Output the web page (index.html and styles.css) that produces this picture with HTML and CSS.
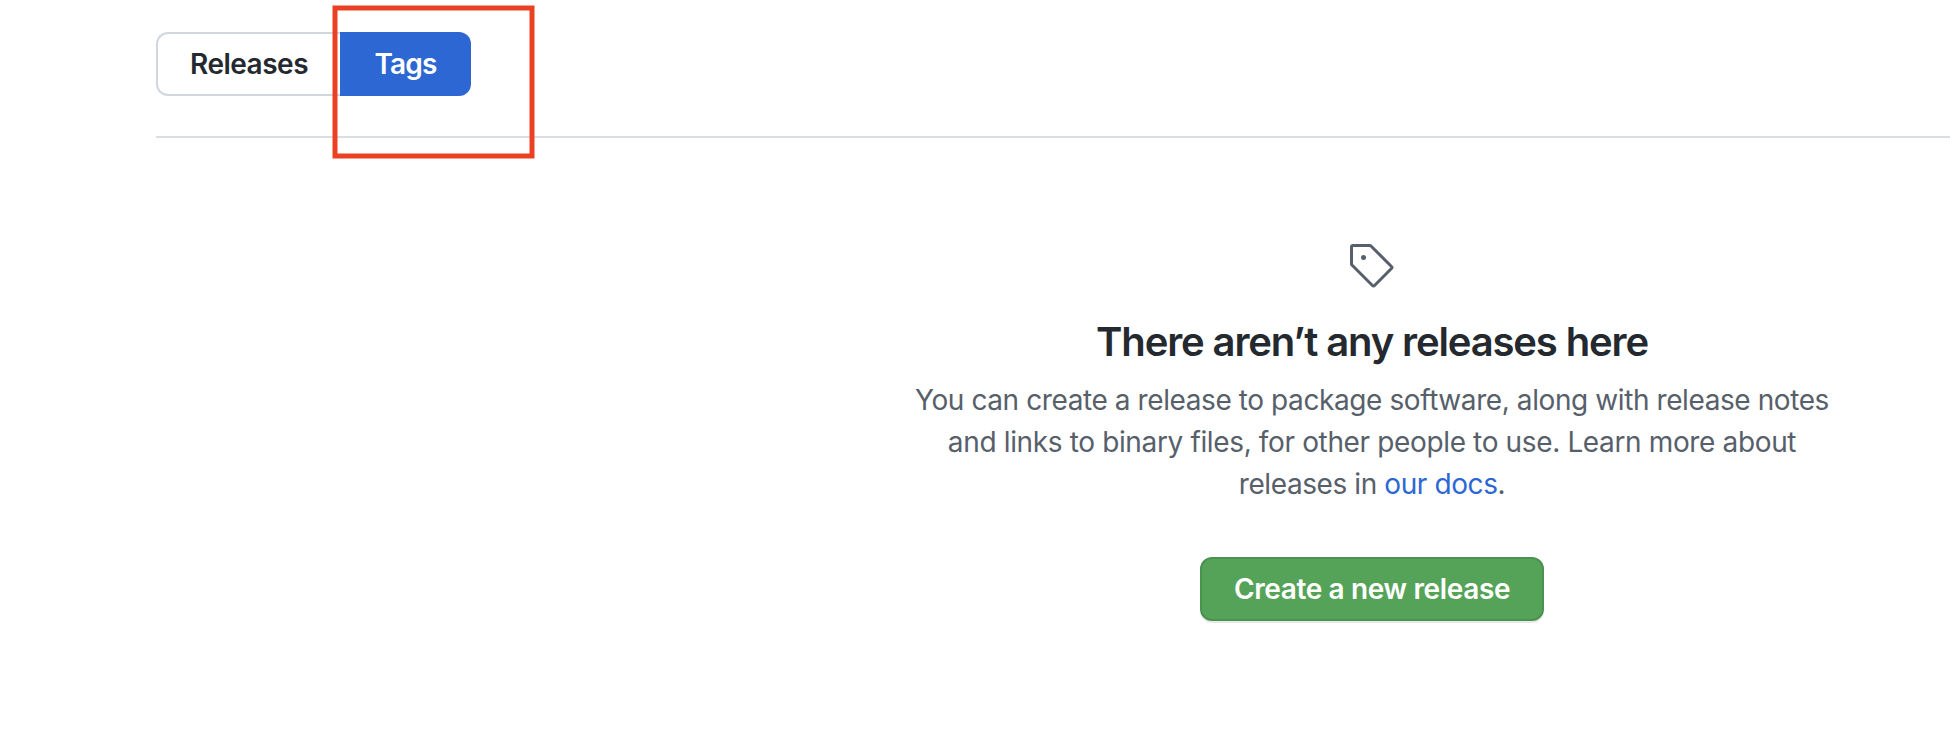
FILE: index.html
```html
<!DOCTYPE html>
<html lang="en">
<head>
<meta charset="utf-8">
<title>Releases</title>
<link rel="stylesheet" href="styles.css">
</head>
<body>
<main class="page">
  <header class="subnav">
    <nav class="tabs">
      <a class="tab tab-releases"><span>Releases</span></a>
      <a class="tab tab-tags"><span>Tags</span></a>
    </nav>
    <svg class="highlight" viewBox="0 0 204 156" width="204" height="156" aria-hidden="true">
      <rect x="3" y="3" width="197" height="148" fill="none" stroke="#ec4025" stroke-width="5"/>
    </svg>
  </header>
  <section class="blankslate">
    <svg class="tag-icon" viewBox="0 0 24 24" width="48" height="48" aria-hidden="true">
      <path d="M7.75 6.5a1.25 1.25 0 100 2.5 1.25 1.25 0 000-2.5z"/>
      <path fill-rule="evenodd" d="M2.5 1A1.5 1.5 0 001 2.5v8.44c0 .397.158.779.44 1.06l10.25 10.25a1.5 1.5 0 002.12 0l8.44-8.44a1.5 1.5 0 000-2.12L12 1.44A1.5 1.5 0 0010.94 1H2.5zm0 1.5h8.44l10.25 10.25-8.44 8.44L2.5 10.94V2.5z"/>
    </svg>
    <h1 class="title">There aren’t any releases here</h1>
    <p class="text">You can create a release to package software, along with release notes<br><span class="text-mid">and links to binary files, for other people to use. Learn more about</span><br>releases in <a class="link">our docs</a>.</p>
    <button class="button" type="button">Create a new release</button>
  </section>
</main>
</body>
</html>
```
FILE: styles.css
```css
* { box-sizing: border-box; }
body {
  margin: 0;
  background: #fff;
  color: #24292f;
  font-family: Inter, "Liberation Sans", sans-serif;
  font-size: 28px;
  overflow: hidden;
}
.page { height: 732px; padding-left: 156px; }
.subnav {
  position: relative;
  height: 138px;
  padding-top: 32px;
  border-bottom: 2px solid #d8dee4;
}
.tabs { display: flex; }
.tab {
  height: 64px;
  display: flex;
  align-items: center;
  justify-content: center;
  font-weight: 600;
  letter-spacing: -.5px;
  white-space: nowrap;
}
.tab-releases {
  width: 184px;
  border: 2px solid #d0d7de;
  border-right: 0;
  border-radius: 12px 0 0 12px;
}
.tab-tags {
  width: 131px;
  color: #fff;
  background: #2d67d3;
  border-radius: 0 12px 12px 0;
  letter-spacing: -.8px;
}
.highlight {
  position: absolute;
  left: 176px;
  top: 5px;
}
.blankslate {
  width: 1000px;
  margin-left: 716px;
  padding-top: 104px;
  display: flex;
  flex-direction: column;
  align-items: center;
  text-align: center;
}
.tag-icon { display: block; fill: #57606a; }
.title {
  margin: 22px 0 0;
  font-size: 40px;
  line-height: 60px;
  font-weight: 600;
  letter-spacing: -1.13px;
  white-space: nowrap;
}
.text {
  margin: 7px 0 0;
  line-height: 42px;
  letter-spacing: -.41px;
  color: #57606a;
  white-space: nowrap;
}
.text-mid { letter-spacing: -.36px; }
.link { color: #2d67d3; }
.button {
  width: 344px;
  height: 64px;
  margin: 52px 0 0;
  padding: 0;
  border: 2px solid #4b9150;
  border-radius: 12px;
  background: #55a358;
  box-shadow: 0 2px 0 rgba(27, 31, 36, .1);
  color: #fff;
  font: 600 28px Inter, "Liberation Sans", sans-serif;
  letter-spacing: -.36px;
  white-space: nowrap;
}
```
